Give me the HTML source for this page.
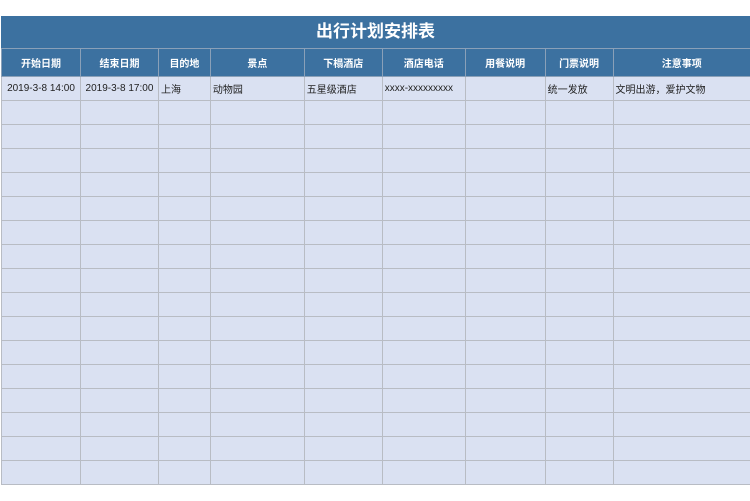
<!DOCTYPE html>
<html><head><meta charset="utf-8"><style>
body{margin:0;width:750px;height:501px;background:#fff;overflow:hidden;font-family:"Liberation Sans","Noto Sans CJK SC",sans-serif;}
.title{position:absolute;left:1px;top:16px;width:749px;height:32px;background:#3c71a0;color:#fff;font-size:17px;font-weight:bold;text-align:center;line-height:31px;}
table{position:absolute;left:1px;top:48px;border-collapse:collapse;table-layout:fixed;}
td{border:1px solid #b8bcc4;padding:0 2px;font-size:10px;white-space:nowrap;overflow:hidden;height:23px;background:#dae1f2;color:#222;}
tr.h td{background:#3c71a0;color:#fff;font-weight:bold;text-align:center;height:27px;border-color:#8aa0b8;}
tr td:last-child{border-right:none}
</style></head><body>
<div class="title">出行计划安排表</div>
<table>
<colgroup><col style="width:79px"><col style="width:78px"><col style="width:52px"><col style="width:94px"><col style="width:78px"><col style="width:83px"><col style="width:80px"><col style="width:68px"><col style="width:137px"></colgroup>
<tr class="h"><td>开始日期</td><td>结束日期</td><td>目的地</td><td>景点</td><td>下榻酒店</td><td>酒店电话</td><td>用餐说明</td><td>门票说明</td><td>注意事项</td></tr>
<tr><td style="text-align:center">2019-3-8 14:00</td><td style="text-align:center">2019-3-8 17:00</td><td>上海</td><td>动物园</td><td>五星级酒店</td><td>xxxx-xxxxxxxxx</td><td></td><td>统一发放</td><td>文明出游，爱护文物</td></tr>
<tr><td></td><td></td><td></td><td></td><td></td><td></td><td></td><td></td><td></td></tr>
<tr><td></td><td></td><td></td><td></td><td></td><td></td><td></td><td></td><td></td></tr>
<tr><td></td><td></td><td></td><td></td><td></td><td></td><td></td><td></td><td></td></tr>
<tr><td></td><td></td><td></td><td></td><td></td><td></td><td></td><td></td><td></td></tr>
<tr><td></td><td></td><td></td><td></td><td></td><td></td><td></td><td></td><td></td></tr>
<tr><td></td><td></td><td></td><td></td><td></td><td></td><td></td><td></td><td></td></tr>
<tr><td></td><td></td><td></td><td></td><td></td><td></td><td></td><td></td><td></td></tr>
<tr><td></td><td></td><td></td><td></td><td></td><td></td><td></td><td></td><td></td></tr>
<tr><td></td><td></td><td></td><td></td><td></td><td></td><td></td><td></td><td></td></tr>
<tr><td></td><td></td><td></td><td></td><td></td><td></td><td></td><td></td><td></td></tr>
<tr><td></td><td></td><td></td><td></td><td></td><td></td><td></td><td></td><td></td></tr>
<tr><td></td><td></td><td></td><td></td><td></td><td></td><td></td><td></td><td></td></tr>
<tr><td></td><td></td><td></td><td></td><td></td><td></td><td></td><td></td><td></td></tr>
<tr><td></td><td></td><td></td><td></td><td></td><td></td><td></td><td></td><td></td></tr>
<tr><td></td><td></td><td></td><td></td><td></td><td></td><td></td><td></td><td></td></tr>
<tr><td></td><td></td><td></td><td></td><td></td><td></td><td></td><td></td><td></td></tr>
</table>
</body></html>
